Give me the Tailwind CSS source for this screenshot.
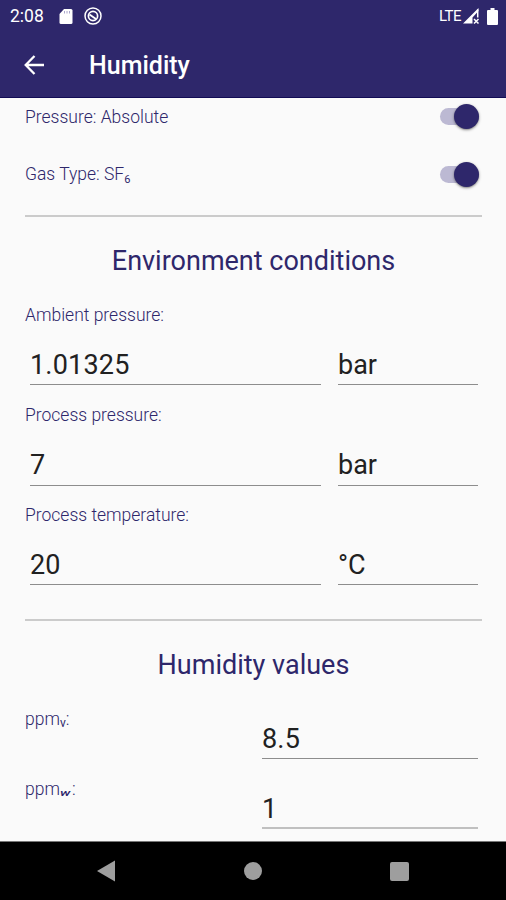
<!DOCTYPE html>
<html lang="en">
<head>
  <meta charset="UTF-8" />
  <meta name="viewport" content="width=device-width, initial-scale=1.0" />
  <title>Humidity</title>
  <script src="https://cdn.jsdelivr.net/npm/@tailwindcss/browser@4"></script>
</head>
<body class="bg-[#fafafa] font-[Roboto,sans-serif] text-[#2e276b]">
  <div class="flex flex-col w-[506px] h-[900px] overflow-hidden">
    <header class="shrink-0 h-[98px] bg-[#2e276b] text-white border-b border-[#120c55]">
      <div class="flex items-center h-8 pl-[10px] pr-[8px]">
        <span class="text-[17.500px] leading-8 w-[49px]">2:08</span>
        <svg class="w-[14px] h-[17px]" viewBox="0 0 14 17" fill="white"><path d="M5 1h7q1.500 0 1.500 1.500v12q0 1.500-1.500 1.500H2q-1.500 0-1.500-1.500V6z"/><path d="M5.500 3v2.500M8 3v2.500M10.500 3v2.500" stroke="#aaa6cc" stroke-width="1"/></svg>
        <svg class="w-[18px] h-[18px] ml-[11px]" viewBox="0 0 18 18" fill="none" stroke="white"><circle cx="9" cy="9" r="8" stroke-width="1.500"/><circle cx="9" cy="9" r="4.600" stroke-width="1.700"/><path d="M5.500 7.500l6.500 4.500" stroke-width="1.800"/></svg>
        <span class="ml-auto text-[15px] leading-8 tracking-[-0.500px]">LTE</span>
        <svg class="w-[17px] h-[16px] ml-[2px]" viewBox="0 0 17 16"><path d="M0 15.500L15.500 0v3L9.500 9.500v6z" fill="white"/><path d="M14.700 1.500v8M11 11l4.500 4.500M15.500 11L11 15.500" stroke="white" stroke-width="1.500"/></svg>
        <svg class="w-[11px] h-[17px] ml-[7px]" viewBox="0 0 11 17" fill="white"><path d="M3.500 0h4v2H10q1 0 1 1v13q0 1-1 1H1q-1 0-1-1V3q0-1 1-1h2.500z"/></svg>
      </div>
      <div class="flex items-center h-[66px] pl-[24px]">
        <svg class="w-[20px] h-[20px]" viewBox="0 0 20 20" fill="none" stroke="white" stroke-width="2.300"><path d="M20 10H2M10.500 1L1.700 10l8.800 9"/></svg>
        <h1 class="ml-[45px] pt-[2px] text-[25px] font-medium">Humidity</h1>
      </div>
    </header>

    <main class="flex-1 pl-[25px] pr-[24px] text-[17.500px] leading-[18px] font-light">
      <div class="flex items-center justify-between h-[37px] pr-[3px]">
        <span>Pressure: Absolute</span>
        <span class="flex items-center justify-end w-[39px] h-[17px] rounded-full bg-[#bcb9d3]"><span class="size-[25px] shrink-0 rounded-full bg-[#2e276b] shadow-sm shadow-black/40"></span></span>
      </div>
      <div class="flex items-center justify-between h-[78px] pr-[3px]">
        <span>Gas Type: SF<span class="inline-block text-[11px] leading-none font-normal translate-y-[3px]">6</span></span>
        <span class="flex items-center justify-end w-[39px] h-[17px] rounded-full bg-[#bcb9d3]"><span class="size-[25px] shrink-0 rounded-full bg-[#2e276b] shadow-sm shadow-black/40"></span></span>
      </div>

      <h2 class="mt-[2px] h-[91px] border-t-2 border-[#cbcbcb] text-[27px] leading-[88px] font-normal text-center">Environment conditions</h2>

      <label class="block">Ambient pressure:</label>
      <div class="flex gap-[17px] mt-[20px] pl-[5px] pr-[4px] text-[27px] leading-[42px] font-normal text-[#212121]">
        <div class="w-[291px] h-[41px] border-b border-[#8d8d8d] tracking-[0.200px]">1.01325</div>
        <div class="flex-1 h-[41px] border-b border-[#8d8d8d]">bar</div>
      </div>
      <label class="block mt-[21px]">Process pressure:</label>
      <div class="flex gap-[17px] mt-[21px] pl-[5px] pr-[4px] text-[27px] leading-[41px] font-normal text-[#212121]">
        <div class="w-[291px] h-[41px] border-b border-[#8d8d8d]">7</div>
        <div class="flex-1 h-[41px] border-b border-[#8d8d8d]">bar</div>
      </div>
      <label class="block mt-[20px]">Process temperature:</label>
      <div class="flex gap-[17px] mt-[20px] pl-[5px] pr-[4px] text-[27px] leading-[42px] font-normal text-[#212121]">
        <div class="w-[291px] h-[41px] border-b border-[#8d8d8d]">20</div>
        <div class="flex-1 h-[41px] border-b border-[#8d8d8d]">°C</div>
      </div>

      <h2 class="mt-[34px] h-[91px] border-t-2 border-[#cbcbcb] text-[27px] leading-[89px] font-normal text-center">Humidity values</h2>

      <div class="flex justify-between h-[49px] pr-[4px]">
        <label>ppm<span class="inline-block text-[12px] leading-none font-normal translate-y-[2px]">v</span>:</label>
        <div class="w-[216px] h-[41px] mt-[8px] border-b border-[#8d8d8d] text-[27px] leading-[42px] font-normal tracking-[0.200px] text-[#212121]">8.5</div>
      </div>
      <div class="flex justify-between h-[49px] mt-[21px] pr-[4px]">
        <label>ppm<span class="inline-block w-[12px] text-[9px] leading-none italic font-medium origin-left scale-x-160 translate-y-[1px]">w</span>:</label>
        <div class="w-[216px] h-[41px] mt-[8px] border-b-2 border-[#c0c0c0] text-[27px] leading-[42px] font-normal text-[#212121]">1</div>
      </div>
    </main>

    <nav class="shrink-0 h-[59px] bg-black border-t border-[#777777] flex items-center justify-between pl-[96px] pr-[97px]">
      <svg class="w-[20px] h-[22px]" viewBox="0 0 20 22" fill="#9e9e9e"><path d="M1 11L19 .5v21z"/></svg>
      <span class="size-[18px] rounded-full bg-[#9e9e9e]"></span>
      <span class="size-[19px] rounded-[2px] bg-[#9e9e9e]"></span>
    </nav>
  </div>
</body>
</html>
